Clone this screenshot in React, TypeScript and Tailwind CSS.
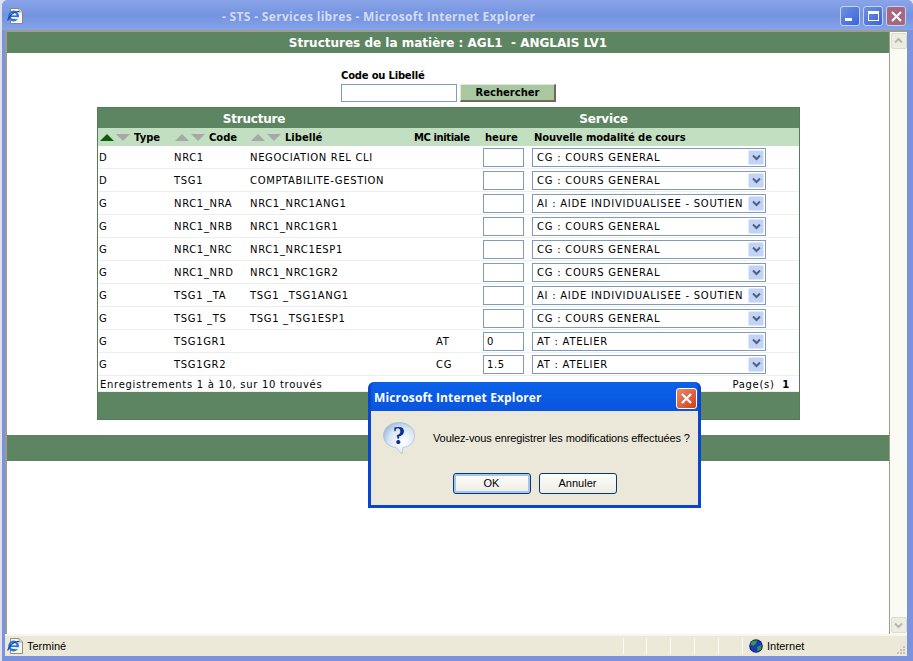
import React from "react";

const rows = [
  ["D", "NRC1", "NEGOCIATION REL CLI", "", "", "CG : COURS GENERAL"],
  ["D", "TSG1", "COMPTABILITE-GESTION", "", "", "CG : COURS GENERAL"],
  ["G", "NRC1_NRA", "NRC1_NRC1ANG1", "", "", "AI : AIDE INDIVIDUALISEE - SOUTIEN"],
  ["G", "NRC1_NRB", "NRC1_NRC1GR1", "", "", "CG : COURS GENERAL"],
  ["G", "NRC1_NRC", "NRC1_NRC1ESP1", "", "", "CG : COURS GENERAL"],
  ["G", "NRC1_NRD", "NRC1_NRC1GR2", "", "", "CG : COURS GENERAL"],
  ["G", "TSG1 _TA", "TSG1 _TSG1ANG1", "", "", "AI : AIDE INDIVIDUALISEE - SOUTIEN"],
  ["G", "TSG1 _TS", "TSG1 _TSG1ESP1", "", "", "CG : COURS GENERAL"],
  ["G", "TSG1GR1", "", "AT", "0", "AT : ATELIER"],
  ["G", "TSG1GR2", "", "CG", "1.5", "AT : ATELIER"],
];

const GRID = "grid grid-cols-[75px_76px_165px_68px_49px_1fr]";

function Tri({ up, on }: { up?: boolean; on?: boolean }) {
  return (
    <svg width="14" height="7" viewBox="0 0 14 7" className="shrink-0">
      <polygon points={up ? "0,7 7,0 14,7" : "0,0 14,0 7,7"} fill={on ? "#0f5a0f" : "#a8a8a8"} />
    </svg>
  );
}

function Sort({ on, label }: { on?: boolean; label: string }) {
  return (
    <div className="flex items-center">
      <Tri up on={on} />
      <span className="w-[2px]" />
      <Tri />
      <span className="ml-[4px] font-bold">{label}</span>
    </div>
  );
}

function Chevron({ disabled }: { disabled?: boolean }) {
  return (
    <svg width="9" height="7" viewBox="0 0 9 7">
      <path d="M1 1.5 L4.5 5 L8 1.5" fill="none" stroke={disabled ? "#b8b8a8" : "#4d6185"} strokeWidth="2" />
    </svg>
  );
}

function Row({ r }: { r: string[] }) {
  return (
    <div className={`${GRID} h-[23px] items-center border-b border-[#eeeeee] pl-[1px] tracking-[0.65px]`}>
      <div>{r[0]}</div>
      <div>{r[1]}</div>
      <div className="whitespace-nowrap">{r[2]}</div>
      <div className="pl-[21px]">{r[3]}</div>
      <div>
        <div className="w-[41px] h-[19px] border border-[#7f9db9] bg-white flex items-center pl-[3px]">{r[4]}</div>
      </div>
      <div>
        <div className="w-[234px] h-[19px] border border-[#7f9db9] bg-white flex items-center justify-between pl-[4px] pr-[1px]">
          <span className="whitespace-nowrap tracking-[0.74px]">{r[5]}</span>
          <span className="w-[16px] h-[15px] rounded-[2px] bg-[#c3d3f5] border border-[#dfe8fb] flex items-center justify-center shrink-0">
            <Chevron />
          </span>
        </div>
      </div>
    </div>
  );
}

function IEIcon({ size = 16 }: { size?: number }) {
  return (
    <svg width={size} height={size} viewBox="0 0 16 16">
      <path d="M3.5 0.5 H12 L15.5 4 V15.5 H3.5 Z" fill="#f5f5ee" stroke="#77776c" strokeWidth="0.8" />
      <path d="M12 0.5 V4 H15.5" fill="#d8d8cc" stroke="#77776c" strokeWidth="0.6" />
      <circle cx="6.6" cy="8" r="4.2" fill="none" stroke="#2a73dc" strokeWidth="2.4" />
      <rect x="3.4" y="7.4" width="6.6" height="1.6" fill="#2a73dc" />
      <rect x="8" y="9.2" width="4" height="2" fill="#f5f5ee" />
      <path d="M0.6 12.5 C2 8 8 2.5 12 3.6" fill="none" stroke="#143f9a" strokeWidth="1.1" />
    </svg>
  );
}

function WinBtn({ children, className }: { children: React.ReactNode; className: string }) {
  return (
    <div className={`w-[20px] h-[20px] rounded-[3px] border border-[#c5d3f5] flex items-center justify-center ${className}`}>
      {children}
    </div>
  );
}

export default function App() {
  return (
    <div className="relative w-[913px] h-[661px] overflow-hidden bg-[#dfe2ee] font-['DejaVu_Sans',sans-serif] text-[10px] text-black">
      <div className="ml-[2px] h-full flex flex-col bg-[#7b93de] rounded-t-[6px]">
        {/* Title bar */}
        <div className="h-[30px] shrink-0 relative flex items-center bg-gradient-to-b from-[#8aa4e9] via-[#7593df] to-[#84a3e9] rounded-t-[6px]">
          <div className="ml-[5px] mt-[2px]">
            <IEIcon size={16} />
          </div>
          <div className="absolute left-[220px] top-[8px] font-['Open_Sans',sans-serif] font-bold text-[12px] tracking-[0.32px] text-[#d3dcf4] whitespace-nowrap leading-[18px]">
            - STS - Services libres - Microsoft Internet Explorer
          </div>
          <div className="ml-auto mr-[7px] flex gap-[3px] mt-[2px]">
            <WinBtn className="bg-gradient-to-br from-[#6f90e4] to-[#3c63d8]">
              <span className="block w-[7px] h-[3px] bg-white mt-[7px] mr-[4px]" />
            </WinBtn>
            <WinBtn className="bg-gradient-to-br from-[#6f90e4] to-[#3c63d8]">
              <span className="block w-[11px] h-[10px] border border-white border-t-[3px]" />
            </WinBtn>
            <WinBtn className="bg-[#a8677f]">
              <svg width="11" height="11" viewBox="0 0 11 11">
                <path d="M1 1 L10 10 M10 1 L1 10" stroke="#ffffff" strokeWidth="2" />
              </svg>
            </WinBtn>
          </div>
        </div>

        {/* Middle */}
        <div className="flex-1 min-h-0 ml-[3px] mr-[6px] flex border-t-2 border-l-2 border-[#a09c8c] bg-white">
          <div className="flex-1 min-w-0 bg-white flex flex-col">
            <div className="h-[21px] bg-[#5e8562] text-white font-bold text-[12px] flex items-center justify-center">
              Structures de la matière : AGL1&nbsp; - ANGLAIS LV1
            </div>

            <div className="ml-[334px] mt-[16px] h-[21px] leading-[13px] font-bold tracking-[-0.2px]">Code ou Libellé</div>
            <div className="ml-[334px] flex h-[32px] items-start mt-[-6px]">
              <div className="w-[116px] h-[18px] border border-[#7f9db9] bg-white" />
              <div className="ml-[3px] w-[96px] h-[18px] bg-[#a9c8a2] border-r-2 border-b-2 border-[#6f6a58] border-t border-l border-t-[#dfe9db] border-l-[#dfe9db] flex items-center justify-center font-bold">
                Rechercher
              </div>
            </div>

            {/* Table */}
            <div className="ml-[90px] mt-[-9px] w-[703px] border border-[#557c59] bg-white">
              <div className="h-[20px] pt-[1px] bg-[#5e8562] text-white font-bold text-[12px] tracking-[-0.2px] flex items-center">
                <div className="w-[312px] text-center">Structure</div>
                <div className="flex-1 text-center pr-[2px]">Service</div>
              </div>
              <div className={`${GRID} h-[18px] items-center bg-[#c3dfc2] pl-[2px]`}>
                <Sort on label="Type" />
                <Sort label="Code" />
                <Sort label="Libellé" />
                <div className="font-bold whitespace-nowrap tracking-[-0.4px] ml-[-2px]">MC initiale</div>
                <div className="font-bold pl-[1px]">heure</div>
                <div className="font-bold pl-[1px] tracking-[-0.1px]">Nouvelle modalité de cours</div>
              </div>
              {rows.map((r, i) => (
                <Row key={i} r={r} />
              ))}
              <div className="h-[16px] pt-[1px] pl-[2px] pr-[9px] flex items-center justify-between border-b border-[#eeeeee] tracking-[0.7px]">
                <span>Enregistrements 1 à 10, sur 10 trouvés</span>
                <span>
                  Page(s)&nbsp;&nbsp;<b>1</b>
                </span>
              </div>
              <div className="h-[27px] bg-[#5e8562]" />
            </div>

            <div className="mt-[15px] h-[26px] bg-[#5e8562]" />
          </div>

          {/* Scrollbar */}
          <div className="w-[18px] shrink-0 bg-[#fbfbf6] border-l border-[#a09c8c] flex flex-col justify-between items-center py-[1px]">
            <div className="w-[16px] h-[16px] rounded-[2px] bg-[#eeede2] border border-[#dcdbcc] flex items-center justify-center rotate-180">
              <Chevron disabled />
            </div>
            <div className="w-[16px] h-[16px] rounded-[2px] bg-[#eeede2] border border-[#dcdbcc] flex items-center justify-center">
              <Chevron disabled />
            </div>
          </div>
        </div>

        {/* Status bar */}
        <div className="relative h-[22px] ml-[3px] mr-[6px] mb-[5px] shrink-0 bg-[#ece9d8] border-t-2 border-[#f8f6ec] flex items-center font-['Liberation_Sans',sans-serif] text-[11px]">
          <div className="ml-[2px] mr-[4px]">
            <IEIcon size={16} />
          </div>
          <span className="pt-[1px]">Terminé</span>
          <div className="ml-auto flex h-full items-center">
            {[0, 1, 2, 3, 4].map((i) => (
              <div key={i} className={`w-[24px] h-[16px] border-r border-[#fbfaf3] ${i === 0 ? "border-l" : ""}`} />
            ))}
            <div className="ml-[6px] mr-[4px]">
              <svg width="14" height="14" viewBox="0 0 14 14">
                <circle cx="7" cy="7" r="6.8" fill="#111a66" />
                <circle cx="7" cy="7" r="6" fill="#1d37b8" />
                <path d="M3 2 L8 1.5 L7 5 L4 7 L1.5 5 Z M8 8 L12 6 L12.5 10 L8.5 12.5 Z" fill="#2e9a3a" />
              </svg>
            </div>
            <span className="w-[140px] pt-[1px]">Internet</span>
          </div>
          <svg width="10" height="10" viewBox="0 0 10 10" className="absolute right-[1px] bottom-[1px]">
            <path d="M7 1h2v2H7z M4 4h2v2H4z M7 4h2v2H7z M1 7h2v2H1z M4 7h2v2H4z M7 7h2v2H7z" fill="#c5c2ae" />
          </svg>
        </div>
      </div>

      {/* Dialog */}
      <div className="absolute left-[368px] top-[382px] w-[333px] h-[126px] rounded-t-[6px] bg-[#0a55e3] border-x-[3px] border-b-[3px] border-[#0846d0] flex flex-col font-['Liberation_Sans',sans-serif] text-[11px]">
        <div className="h-[29px] shrink-0 flex items-center justify-between pl-[3px] pr-[1px] pt-[3px] bg-gradient-to-b from-[#0b61e8] to-[#0a54de] rounded-t-[6px]">
          <span className="font-['Open_Sans',sans-serif] font-bold text-[12px] tracking-[0.15px] text-white">Microsoft Internet Explorer</span>
          <div className="w-[21px] h-[21px] rounded-[3px] border border-white bg-gradient-to-br from-[#e88a68] to-[#cf3c16] flex items-center justify-center">
            <svg width="11" height="11" viewBox="0 0 11 11">
              <path d="M1 1 L10 10 M10 1 L1 10" stroke="#ffffff" strokeWidth="2.2" />
            </svg>
          </div>
        </div>
        <div className="flex-1 bg-[#ebe8d9] flex flex-col">
          <div className="flex pl-[11px] pt-[10px]">
            <svg width="34" height="34" viewBox="0 0 34 34" className="shrink-0">
              <defs>
                <radialGradient id="bubble" cx="0.62" cy="0.62" r="0.75">
                  <stop offset="0" stopColor="#ffffff" />
                  <stop offset="0.6" stopColor="#d6e6f6" />
                  <stop offset="1" stopColor="#8fb0d6" />
                </radialGradient>
              </defs>
              <path d="M17 1.5 C26 1.5 32.5 7 32.5 14.5 C32.5 21.5 27 26 21 26.5 L20 33 L14 26.5 C7 26 1.5 21.5 1.5 14.5 C1.5 7 8 1.5 17 1.5 Z" fill="url(#bubble)" stroke="#9fb6cf" strokeWidth="0.6" />
              <text x="17" y="23" textAnchor="middle" fontFamily="'Liberation Serif',serif" fontWeight="700" fontSize="25" fill="#0c2a8c">?</text>
            </svg>
            <div className="ml-[17px] mt-[10px] whitespace-nowrap leading-[14px] tracking-[-0.11px]">Voulez-vous enregistrer les modifications effectuées ?</div>
          </div>
          <div className="flex justify-center gap-[8px] mt-[18px]">
            <div className="w-[78px] h-[21px] rounded-[3px] border border-[#003c74] bg-gradient-to-b from-[#fdfdfb] to-[#eeede4] shadow-[inset_0_0_0_2px_#a8c4ee] flex items-center justify-center">OK</div>
            <div className="w-[78px] h-[21px] rounded-[3px] border border-[#003c74] bg-gradient-to-b from-[#fdfdfb] to-[#eeede4] flex items-center justify-center">Annuler</div>
          </div>
        </div>
      </div>
    </div>
  );
}
